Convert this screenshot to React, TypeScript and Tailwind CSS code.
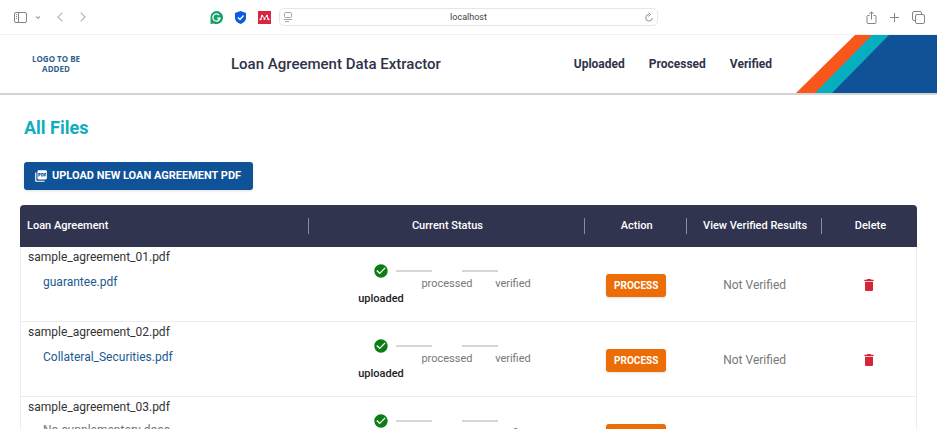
import { MdCheckCircle, MdDelete, MdPictureAsPdf } from "react-icons/md";

type AgreementFile = {
  name: string;
  supplementary: string | null;
};

const files: AgreementFile[] = [
  { name: "sample_agreement_01.pdf", supplementary: "guarantee.pdf" },
  { name: "sample_agreement_02.pdf", supplementary: "Collateral_Securities.pdf" },
  { name: "sample_agreement_03.pdf", supplementary: null },
];

function GrammarlyIcon() {
  return (
    <svg className="size-[13px]" viewBox="0 0 24 24" aria-hidden="true">
      <path d="M12 0a12 12 0 1 1-5 22.900L1 24V12A11.500 11.500 0 0 1 12 0Z" fill="#15a06a" />
      <path d="M17 7.500A6.700 6.700 0 1 0 18.500 13H13" fill="none" stroke="#fff" strokeWidth="2.400" />
      <path d="m15.500 16 3-3.500" fill="none" stroke="#fff" strokeWidth="2" />
    </svg>
  );
}

function ShieldIcon() {
  return (
    <svg className="h-[13px] w-[11px]" viewBox="0 0 22 26" aria-hidden="true">
      <path d="M11 0 22 4v10c0 6-5 10-11 12C5 24 0 20 0 14V4Z" fill="#0b5be0" />
      <path d="m6 13 4 4 7-8" fill="none" stroke="#fff" strokeWidth="2.800" />
    </svg>
  );
}

function MendeleyIcon() {
  return (
    <svg className="size-[13px]" viewBox="0 0 26 26" aria-hidden="true">
      <rect width="26" height="26" fill="#d9263f" />
      <path d="M6 16 7.500 9.500 13 14l5.500-4.500L20 16" fill="none" stroke="#fff" strokeWidth="2" />
      <circle cx="8" cy="9.500" r="2" fill="#fff" />
      <circle cx="18" cy="9.500" r="2" fill="#fff" />
      <circle cx="5" cy="16.500" r="2.200" fill="#fff" />
      <circle cx="13" cy="16" r="2.200" fill="#fff" />
      <circle cx="21" cy="16.500" r="2.200" fill="#fff" />
    </svg>
  );
}

function BrowserBar() {
  return (
    <div className="grid h-[35px] shrink-0 grid-cols-[1fr_379px_1fr] items-center border-b border-[#f1f1f1] bg-white text-[#858585]">
      <div className="flex items-center justify-between pr-2 pl-3.5">
        <div className="flex items-center">
          <button type="button" aria-label="Toggle sidebar">
            <svg className="h-[11px] w-[13px]" viewBox="0 0 13 11" fill="none" stroke="currentColor" aria-hidden="true">
              <rect x="0.500" y="0.500" width="12" height="10" rx="1.500" />
              <path d="M4.500 1v9M2 2.500h1M2 4.500h1M2 6.500h1" />
            </svg>
          </button>
          <button type="button" aria-label="Tab groups" className="ml-2">
            <svg className="h-[9px] w-[6px]" viewBox="0 0 6 9" fill="none" stroke="#a8a8a8" strokeWidth="1.200" aria-hidden="true">
              <path d="m1 3.500 2 2 2-2" />
            </svg>
          </button>
          <button type="button" aria-label="Back" className="ml-4">
            <svg className="h-[10px] w-[6px]" viewBox="0 0 6 10" fill="none" stroke="#b5b5b5" strokeWidth="1.200" aria-hidden="true">
              <path d="M5.300.700 1 5l4.300 4.300" />
            </svg>
          </button>
          <button type="button" aria-label="Forward" className="ml-[17px]">
            <svg className="h-[10px] w-[6px]" viewBox="0 0 6 10" fill="none" stroke="#b5b5b5" strokeWidth="1.200" aria-hidden="true">
              <path d="M.700.700 5 5 .700 9.300" />
            </svg>
          </button>
        </div>
        <div className="flex items-center gap-3">
          <GrammarlyIcon />
          <ShieldIcon />
          <MendeleyIcon />
        </div>
      </div>

      <div className="flex h-[18px] items-center rounded-[5px] border border-[#e6e6e6] px-1">
        <svg className="h-[10px] w-[8px]" viewBox="0 0 8 10" fill="none" stroke="#a3a3a3" aria-hidden="true">
          <rect x="0.500" y="0.500" width="7" height="5" rx="1" />
          <path d="M0 7.500h8M1 9.500h4" />
        </svg>
        <input
          type="text"
          aria-label="Address"
          defaultValue="localhost"
          className="min-w-0 flex-1 bg-transparent text-center text-[9px] leading-4 text-[#444] outline-none"
        />
        <button type="button" aria-label="Reload">
          <svg className="h-[10px] w-[8px]" viewBox="0 0 8 10" fill="none" stroke="currentColor" strokeWidth="0.900" aria-hidden="true">
            <path d="M4 2.500A3.300 3.300 0 1 0 7.300 6M3.500.500l2 2-2 2" />
          </svg>
        </button>
      </div>

      <div className="flex items-center justify-end gap-3 pr-3">
        <button type="button" aria-label="Share">
          <svg className="h-[13px] w-[11px]" viewBox="0 0 11 13" fill="none" stroke="currentColor" aria-hidden="true">
            <path d="M3.500 4.500H2a1 1 0 0 0-1 1v6a1 1 0 0 0 1 1h7a1 1 0 0 0 1-1v-6a1 1 0 0 0-1-1H7.500M5.500 8.500V1M3.300 3l2.200-2.200L7.700 3" />
          </svg>
        </button>
        <button type="button" aria-label="New tab">
          <svg className="size-[11px]" viewBox="0 0 11 11" fill="none" stroke="currentColor" aria-hidden="true">
            <path d="M5.500 1v9M1 5.500h9" />
          </svg>
        </button>
        <button type="button" aria-label="Show all tabs">
          <svg className="size-[13px]" viewBox="0 0 13 13" fill="none" stroke="currentColor" aria-hidden="true">
            <rect x="3.500" y="3.500" width="9" height="9" rx="1.500" />
            <path d="M3.500 9.500H2A1.500 1.500 0 0 1 .500 8V2A1.500 1.500 0 0 1 2 .500h6A1.500 1.500 0 0 1 9.500 2v1.500" />
          </svg>
        </button>
      </div>
    </div>
  );
}

function SiteHeader() {
  return (
    <header className="flex h-[60px] shrink-0 items-center border-b-2 border-[#d4d4d4] bg-white text-[#2f3349]">
      <div className="w-28 px-7 text-center font-['Open_Sans','Liberation_Sans',sans-serif] text-[8px] leading-[10px] font-bold text-[#2f608f]">
        LOGO TO BE ADDED
      </div>
      <h1 className="ml-[119px] text-[15px] font-medium">Loan Agreement Data Extractor</h1>
      <nav className="mr-6 ml-auto flex gap-6 text-xs font-bold">
        <a href="#uploaded">Uploaded</a>
        <a href="#processed">Processed</a>
        <a href="#verified">Verified</a>
      </nav>
      <svg className="h-full w-[141px]" viewBox="0 0 141 59" preserveAspectRatio="none" aria-hidden="true">
        <path d="M59 0H77L20 59H0Z" fill="#f9561b" />
        <path d="M76 0H94L37 59H19Z" fill="#06afc0" />
        <path d="M93 0H141V59H36Z" fill="#105297" />
      </svg>
    </header>
  );
}

function StatusStepper() {
  return (
    <div className="mx-auto w-[198px] text-[11px] leading-4 text-[#777]">
      <div className="flex items-center px-[25px]">
        <MdCheckCircle className="size-4 text-[#0c7d16]" aria-hidden="true" />
        <span className="ml-[7px] h-[2px] w-9 bg-[#d6d6d6]" />
        <span className="ml-[30px] h-[2px] w-9 bg-[#d6d6d6]" />
      </div>
      <ol className="grid grid-cols-3 text-center">
        <li className="pt-3 font-medium text-[#222]">uploaded</li>
        <li className="-mt-[3px]">processed</li>
        <li className="-mt-[3px]">verified</li>
      </ol>
    </div>
  );
}

function FileRow({ file }: { file: AgreementFile }) {
  return (
    <tr className="h-[75px] *:border-b *:border-[#ececec]">
      <td className="border-l px-[7px] pt-[2px] align-top text-xs leading-4 text-[#333]">
        <div>{file.name}</div>
        {file.supplementary ? (
          <div className="mt-[9px] pl-[15px]">
            <a href="#file" className="text-[#215a91]">
              {file.supplementary}
            </a>
          </div>
        ) : (
          <p className="mt-[7px] pl-[15px] text-[#777]">No supplementary docs</p>
        )}
      </td>
      <td className="pt-4 align-top">
        <StatusStepper />
      </td>
      <td className="pt-px text-center align-middle">
        <button
          type="button"
          className="h-[23px] rounded-[3px] bg-[#ec6c05] px-2 text-[10px] font-bold text-white shadow-sm"
        >
          PROCESS
        </button>
      </td>
      <td className="pt-px text-center align-middle text-xs text-[#777]">Not Verified</td>
      <td className="border-r pt-px text-center align-middle">
        <button type="button" aria-label={`Delete ${file.name}`} className="align-middle">
          <MdDelete className="size-4 text-[#d32636]" />
        </button>
      </td>
    </tr>
  );
}

function HeadCell({ label, last = false }: { label: string; last?: boolean }) {
  return (
    <th scope="col" className="p-0 font-medium">
      <div className={last ? "pl-0.5 leading-4" : "border-r border-[#8b8d9f] pl-0.5 leading-4"}>{label}</div>
    </th>
  );
}

export default function App() {
  return (
    <div className="flex h-screen flex-col overflow-hidden bg-white font-['Roboto','Liberation_Sans',sans-serif]">
      <BrowserBar />
      <SiteHeader />
      <main className="min-h-0 flex-1 overflow-hidden px-5 pt-[19px]">
        <h2 className="ml-1 text-lg leading-7 font-bold text-[#12adbd]">All Files</h2>
        <button
          type="button"
          className="mt-5 ml-1 flex h-7 items-center gap-1 rounded-[3px] bg-[#105297] pr-3 pl-2.5 text-[11px] font-bold text-white shadow-sm"
        >
          <MdPictureAsPdf className="size-3.5" aria-hidden="true" />
          UPLOAD NEW LOAN AGREEMENT PDF
        </button>
        <div className="mt-[15px] overflow-hidden rounded-t-[4px]">
          <table className="w-full table-fixed border-separate border-spacing-0">
            <colgroup>
              <col className="w-[32.2%]" />
              <col className="w-[30.8%]" />
              <col className="w-[11.4%]" />
              <col className="w-[15%]" />
              <col />
            </colgroup>
            <thead className="bg-[#31344f] text-[11px] text-white">
              <tr className="h-[42px]">
                <th scope="col" className="p-0 text-left font-medium">
                  <div className="border-r border-[#8b8d9f] pl-[7px] leading-4">Loan Agreement</div>
                </th>
                <HeadCell label="Current Status" />
                <HeadCell label="Action" />
                <HeadCell label="View Verified Results" />
                <HeadCell label="Delete" last />
              </tr>
            </thead>
            <tbody>
              {files.map((file) => (
                <FileRow key={file.name} file={file} />
              ))}
            </tbody>
          </table>
        </div>
      </main>
    </div>
  );
}
